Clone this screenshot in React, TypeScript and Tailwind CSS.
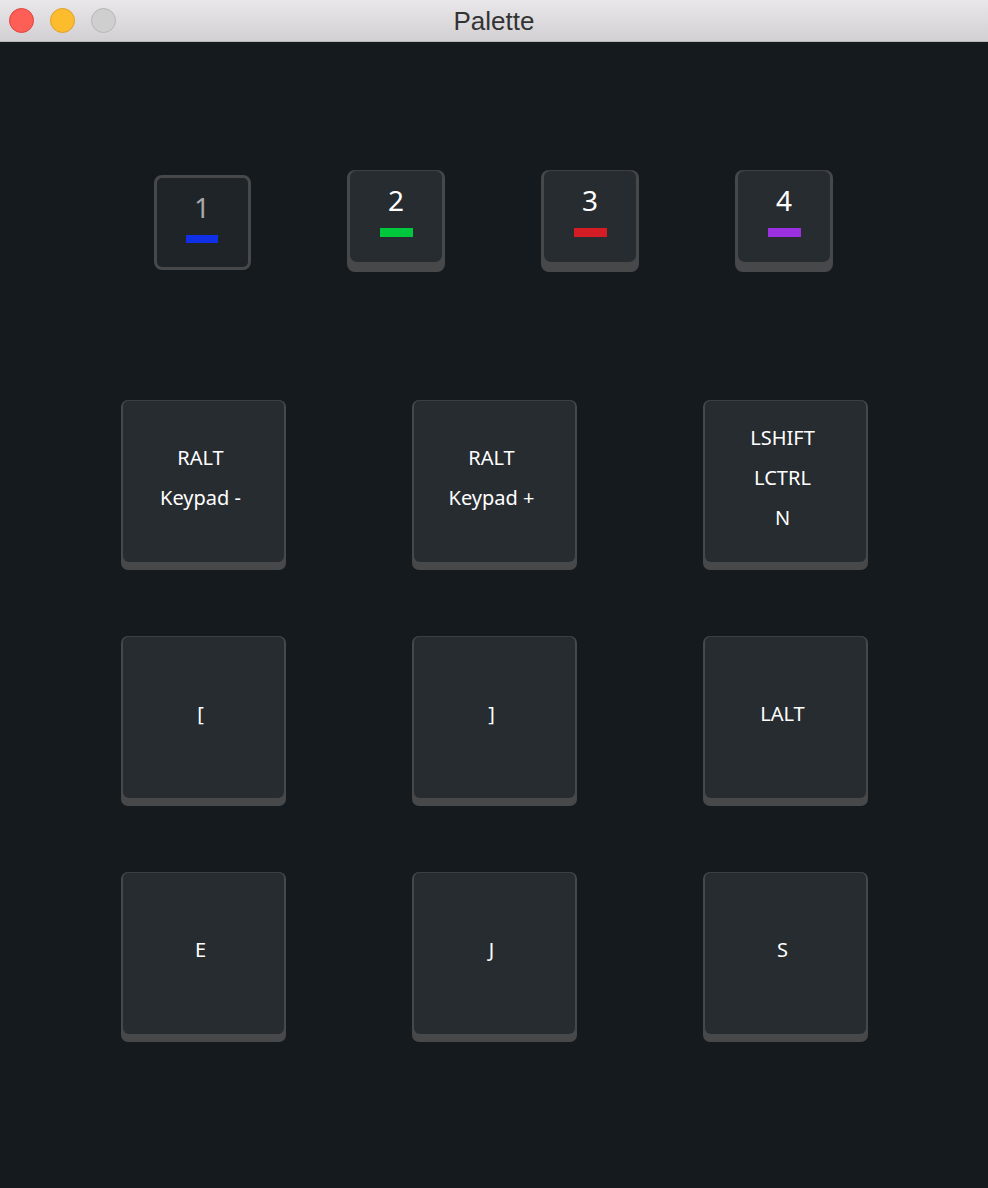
import React from "react";

const numKeys = [
  { n: "1", color: "#1030e8", pressed: true },
  { n: "2", color: "#00c83c", pressed: false },
  { n: "3", color: "#d41c24", pressed: false },
  { n: "4", color: "#9a30e0", pressed: false },
];

const bigKeys: string[][] = [
  ["RALT", "Keypad -"],
  ["RALT", "Keypad +"],
  ["LSHIFT", "LCTRL", "N"],
  ["["],
  ["]"],
  ["LALT"],
  ["E"],
  ["J"],
  ["S"],
];

function NumKey({ n, color, pressed }: { n: string; color: string; pressed: boolean }) {
  if (pressed) {
    return (
      <div className="mt-[5px] w-[97px] h-[95px] rounded-[8px] border-[3px] border-[#47484a] bg-[#1f2429] flex flex-col items-center">
        <div className="mt-[13px] text-[28px] leading-[32px] text-[#a8a8a8]">{n}</div>
        <div className="mt-[12px] w-[32px] h-[8px]" style={{ background: color }} />
      </div>
    );
  }
  return (
    <div className="w-[98px] h-[102px] rounded-[8px] bg-[#47484a] px-[3px] pb-[10px]">
      <div className="h-full rounded-[7px] bg-[#272c31] border-t border-[#3c3f42] flex flex-col items-center">
        <div className="mt-[13px] text-[28px] leading-[32px] text-white">{n}</div>
        <div className="mt-[12px] w-[33px] h-[9px]" style={{ background: color }} />
      </div>
    </div>
  );
}

function BigKey({ lines }: { lines: string[] }) {
  return (
    <div className="w-[165px] h-[170px] rounded-[7px] bg-[#47484a] px-[2px] pb-[8px]">
      <div className="h-full rounded-[6px] bg-[#272c31] border-t border-[#3c3f42] flex flex-col items-center justify-center pb-[8px] pr-[6px]">
        {lines.map((l, i) => (
          <div key={i} className="text-[20px] leading-[40px] text-white">
            {l}
          </div>
        ))}
      </div>
    </div>
  );
}

export default function App() {
  return (
    <div
      className="w-[988px] h-[1188px] bg-[#151a1f] flex flex-col overflow-hidden"
      style={{ fontFamily: '"Noto Sans", sans-serif' }}
    >
      <div className="h-[42px] shrink-0 bg-gradient-to-b from-[#e9e7e9] to-[#d2d0d2] border-b border-[#b9b7b9] flex items-center relative">
        <div className="flex items-center gap-[16px] pl-[9px]">
          <div className="w-[25px] h-[25px] rounded-full bg-[#fd5f57] border border-[#e0443e]" />
          <div className="w-[25px] h-[25px] rounded-full bg-[#fdbc2e] border border-[#dea123]" />
          <div className="w-[25px] h-[25px] rounded-full bg-[#d0cfd0] border border-[#b8b6b8]" />
        </div>
        <div
          className="absolute left-0 right-0 text-center text-[26px] leading-[30px] text-[#333333] pointer-events-none"
          style={{ fontFamily: '"Liberation Sans", Arial, sans-serif' }}
        >
          Palette
        </div>
      </div>

      <div className="pt-[128px] pl-[105px] grid grid-cols-[repeat(4,194px)] justify-items-center items-start">
        {numKeys.map((k) => (
          <NumKey key={k.n} {...k} />
        ))}
      </div>

      <div className="pt-[128px] pl-[121px] grid grid-cols-[repeat(3,165px)] gap-x-[126px] gap-y-[66px]">
        {bigKeys.map((l, i) => (
          <BigKey key={i} lines={l} />
        ))}
      </div>
    </div>
  );
}
